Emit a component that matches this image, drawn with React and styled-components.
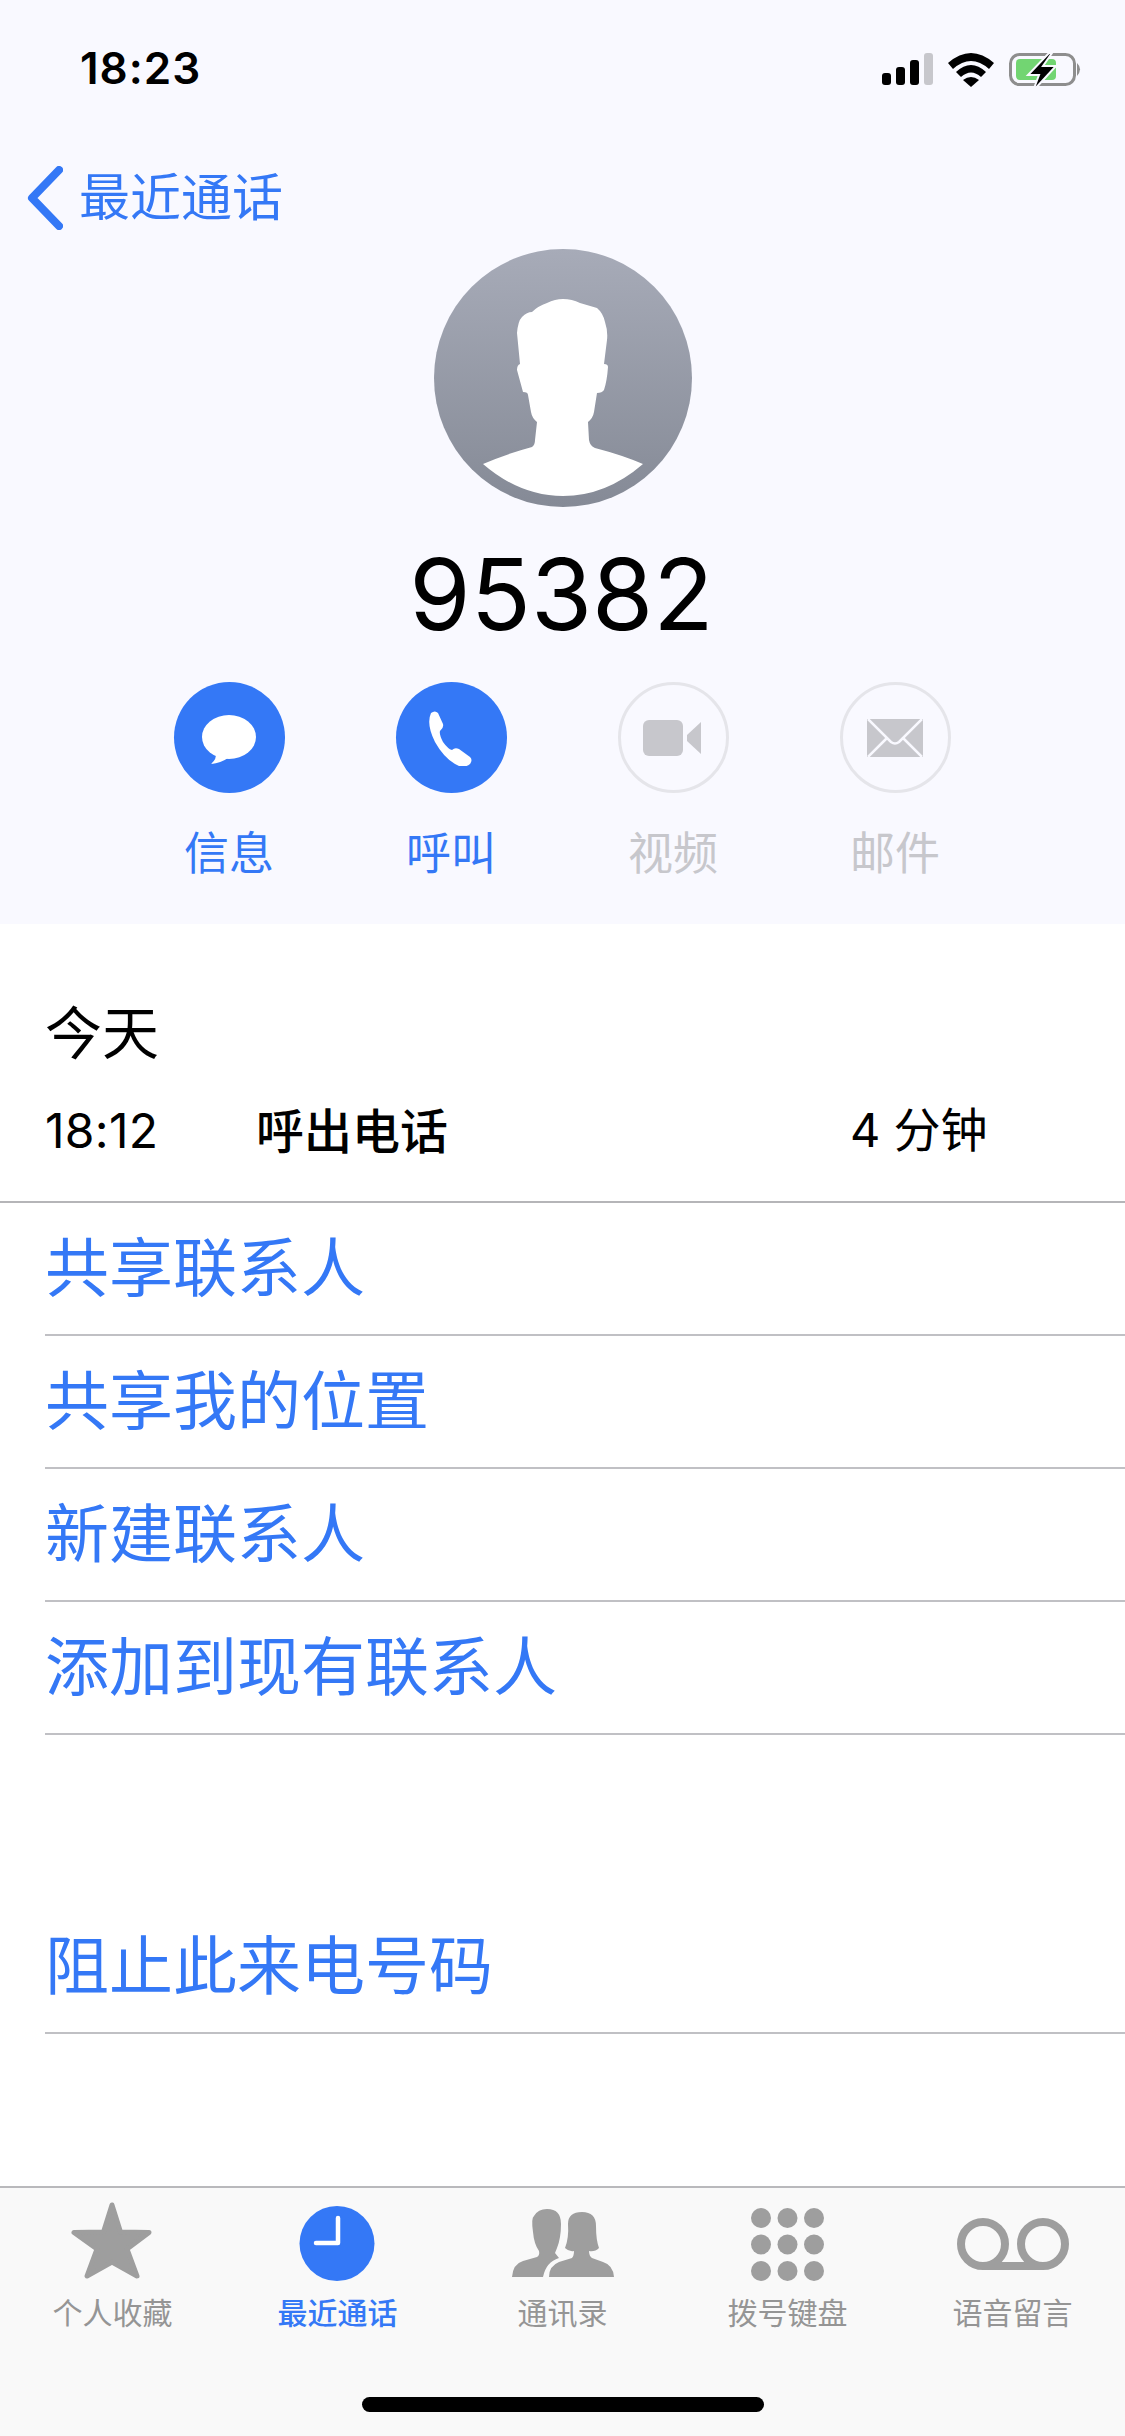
import styled, { createGlobalStyle } from "styled-components";

const BLUE = "#3478f6";
const GREY = "#9e9e9e";
const CJK = `"Noto Sans CJK SC", "Noto Sans", sans-serif`;

const Global = createGlobalStyle`
html, body {
    margin: 0;
    padding: 0;
    background: #fff;
}
`;

const Page = styled.div`
width: 1125px;
height: 2436px;
display: flex;
flex-direction: column;
background: #fff;
font-family: Inter, ${CJK};
overflow: hidden;
`;

const Header = styled.div`
height: 924px;
background: #f9f9ff;
display: flex;
flex-direction: column;
align-items: center;
`;

const StatusBar = styled.div`
align-self: stretch;
height: 136px;
padding: 48px 43px 0 80px;
box-sizing: border-box;
display: flex;
justify-content: space-between;
align-items: flex-start;
`;

const Time = styled.div`
font-size: 44px;
line-height: 40px;
font-weight: 600;
letter-spacing: 1px;
color: #000;
`;

const StatusIcons = styled.svg`
display: block;
margin-top: 5px;
`;

const BackRow = styled.div`
align-self: stretch;
height: 111px;
margin-top: 2px;
padding-left: 27px;
display: flex;
align-items: center;
gap: 16px;
color: ${BLUE};
font-size: 51px;
font-family: ${CJK};
`;

const Chevron = styled.svg`
display: block;
margin-top: 8px;
`;

const Avatar = styled.div`
width: 258px;
height: 258px;
border-radius: 50%;
background: linear-gradient(#a7abb8, #858a96);
overflow: hidden;
`;

const Number = styled.div`
margin: 22px 2px 0 0;
font-size: 99px;
line-height: 130px;
color: #000;
font-weight: 400;
`;

const Actions = styled.div`
margin: 23px 0 0 -1px;
display: flex;
`;

const Action = styled.div`
width: 222px;
display: flex;
flex-direction: column;
align-items: center;
gap: 30px;
color: ${({ $off }) => ($off ? "#c7c7cc" : BLUE)};
font-size: 45px;
line-height: 56px;
font-family: ${CJK};
`;

const Round = styled.div`
width: 111px;
height: 111px;
box-sizing: border-box;
border-radius: 50%;
display: flex;
align-items: center;
justify-content: center;
background: ${({ $off }) => ($off ? "transparent" : BLUE)};
border: ${({ $off }) => ($off ? "3px solid #e5e5ea" : "none")};
`;

const CallBlock = styled.div`
height: 279px;
padding: 69px 0 0 45px;
box-sizing: border-box;
border-bottom: 2px solid #b5b5b8;
font-family: ${CJK};
color: #000;
`;

const Day = styled.div`
font-size: 57px;
line-height: 72px;
`;

const CallRow = styled.div`
margin-top: 25px;
display: flex;
align-items: center;
font-size: 47px;
line-height: 70px;
`;

const CallTime = styled.div`
width: 211px;
padding-top: 6px;
font-size: 48px;
letter-spacing: 0.3px;
font-family: Inter, ${CJK};
`;

const CallType = styled.div`
width: 594px;
font-weight: 500;
font-size: 48px;
`;

const CallLength = styled.div`
padding-top: 4px;
font-family: Inter, ${CJK};
`;

const ActionList = styled.div`
flex: 1;
font-family: ${CJK};
`;

const Row = styled.div`
height: 133px;
margin-left: 45px;
padding-bottom: 12px;
box-sizing: border-box;
border-bottom: 2px solid #c0c0c4;
display: flex;
align-items: center;
color: ${BLUE};
font-size: 64px;
`;

const Spacer = styled.div`
height: 166px;
`;

const TabBar = styled.div`
height: 250px;
box-sizing: border-box;
background: #f9f9f9;
border-top: 2px solid #b9b9bc;
display: flex;
flex-direction: column;
`;

const Tabs = styled.div`
height: 148px;
display: flex;
`;

const Tab = styled.div`
width: 225px;
display: flex;
flex-direction: column;
align-items: center;
color: ${({ $active }) => ($active ? BLUE : "#959595")};
font-size: 30px;
line-height: 40px;
font-weight: ${({ $active }) => ($active ? 500 : 400)};
font-family: ${CJK};
`;

const TabIcon = styled.svg`
display: block;
height: 94px;
margin-bottom: 9px;
`;

const IndicatorWrap = styled.div`
flex: 1;
display: flex;
justify-content: center;
padding-top: 61px;
`;

const Indicator = styled.div`
width: 402px;
height: 15px;
border-radius: 8px;
background: #000;
`;

function Status() {
    return (
        <StatusIcons width="200" height="40" viewBox="0 0 200 40">
            <rect x="0" y="20" width="9" height="12" rx="3" fill="#000" />
            <rect x="14" y="14" width="9" height="18" rx="3" fill="#000" />
            <rect x="28" y="7" width="9" height="25" rx="3" fill="#000" />
            <rect x="42" y="0" width="9" height="32" rx="3" fill="#c7c7cc" />
            <path d="M66 10 Q89 -10 112 10 L107 16 Q89 0 71 16 Z" fill="#000" />
            <path d="M74 19 Q89 5 104 19 L99 24 Q89 15 79 24 Z" fill="#000" />
            <path d="M81 27 Q89 21 97 27 L89 34 Z" fill="#000" />
            <rect x="128.500" y="1.500" width="64" height="30" rx="9" fill="none" stroke="#8e8e8e" strokeWidth="3" />
            <rect x="134" y="6" width="40" height="21" rx="4" fill="#72d572" />
            <path d="M195 10 Q201 16 195 23 Z" fill="#8e8e8e" />
            <path d="M167 0 L146 22 L157 22 L151 38 L174 13 L161 13 L170 0 Z" fill="#000" stroke="#f9f9ff" strokeWidth="2" />
        </StatusIcons>
    );
}

const tabs = [
    {
        label: "个人收藏",
        icon: (
            <TabIcon width="90" viewBox="0 0 90 94">
                <path d="M44 17 L52.500 44 L81 44.500 L59 61 L69 88 L44 74 L19 88 L29 61 L6 44.500 L35.500 44 Z" fill={GREY} stroke={GREY} strokeWidth="5" strokeLinejoin="round" />
            </TabIcon>
        ),
    },
    {
        label: "最近通话",
        active: true,
        icon: (
            <TabIcon width="80" viewBox="0 0 80 94">
                <circle cx="39" cy="55.500" r="37.500" fill={BLUE} />
                <path d="M40 30 V55 H18" fill="none" stroke="#fff" strokeWidth="4.500" strokeLinecap="round" strokeLinejoin="round" />
            </TabIcon>
        ),
    },
    {
        label: "通讯录",
        icon: (
            <TabIcon width="104" viewBox="0 0 104 94">
                <path d="M1 89 Q2 76 12 73 L26 69 Q29 67 28 63 Q23 56 22 44 Q20 30 23 28 Q27 21 36 21 Q50 21 50 36 Q50 50 46 60 L44 65 L48 70 Q35 74 32 89 Z" fill={GREY} />
                <path d="M38 89 Q38 78 48 74 L61 70 Q63 68 63 63 Q58 64 54 60 Q58 50 57 36 Q57 24 71 24 Q85 24 85 38 Q85 52 88 60 Q84 64 78 63 Q78 68 81 70 L92 74 Q102 77 103 89 Z" fill={GREY} />
            </TabIcon>
        ),
    },
    {
        label: "拨号键盘",
        icon: (
            <TabIcon width="74" viewBox="0 0 74 94">
                {[0, 1, 2].map((r) =>
                    [0, 1, 2].map((c) => (
                        <circle key={`${r}-${c}`} cx={10 + c * 26.5} cy={30 + r * 26.5} r="10" fill={GREY} />
                    ))
                )}
            </TabIcon>
        ),
    },
    {
        label: "语音留言",
        icon: (
            <TabIcon width="112" viewBox="0 0 112 94">
                <circle cx="26" cy="56" r="22" fill="none" stroke={GREY} strokeWidth="8" />
                <circle cx="86" cy="56" r="22" fill="none" stroke={GREY} strokeWidth="8" />
                <path d="M26 78 H86" stroke={GREY} strokeWidth="8" />
            </TabIcon>
        ),
    },
];

export default function App() {
    return (
        <Page>
            <Global />
            <Header>
                <StatusBar>
                    <Time>18:23</Time>
                    <Status />
                </StatusBar>
                <BackRow>
                    <Chevron width="36" height="64" viewBox="0 0 36 64">
                        <path d="M32 4 L5 32 L32 60" fill="none" stroke={BLUE} strokeWidth="8" strokeLinecap="round" strokeLinejoin="round" />
                    </Chevron>
                    最近通话
                </BackRow>
                <Avatar>
                    <svg width="258" height="258" viewBox="0 0 258 258">
                        <path
                            fill="#fff"
                            d="M49 215 Q72 205 98 198 Q101 196 101 191 L103 173 Q98 169 97 163 L94 146 Q94 143 89 143 Q86 132 83 121 Q83 116 86 115 L83 84 Q84 72 88 68 Q93 63 98 63 Q104 57 113 54 Q121 50 129 50 Q138 50 146 54 L163 59 Q169 64 171 73 Q174 82 173 91 L170 115 Q174 115 174 118 Q173 132 170 141 Q168 144 163 144 L160 163 Q159 169 154 173 L155 191 Q156 197 161 199 Q188 206 209 215 Q172 247 129 247 Q86 247 49 215 Z"
                        />
                    </svg>
                </Avatar>
                <Number>95382</Number>
                <Actions>
                    <Action>
                        <Round>
                            <svg width="56" height="56" viewBox="0 0 56 56">
                                <ellipse cx="28" cy="27" rx="27" ry="22" fill="#fff" />
                                <path d="M15 42 Q16 49 10 54 Q20 53 27 48 Z" fill="#fff" />
                            </svg>
                        </Round>
                        信息
                    </Action>
                    <Action>
                        <Round>
                            <svg width="56" height="56" viewBox="0 0 56 56">
                                <path d="M8 3 Q12 0 15 3 L20 14 Q21 18 17 21 Q16 24 20 32 Q25 39 29 40 Q32 37 36 39 L47 47 Q50 50 47 54 Q42 58 36 56 Q22 50 12 32 Q3 14 8 3 Z" fill="#fff" />
                            </svg>
                        </Round>
                        呼叫
                    </Action>
                    <Action $off>
                        <Round $off>
                            <svg width="60" height="40" viewBox="0 0 60 40">
                                <rect x="0" y="2" width="40" height="36" rx="6" fill="#c7c7cc" />
                                <path d="M44 17 L58 4 V36 L44 23 Z" fill="#c7c7cc" />
                            </svg>
                        </Round>
                        视频
                    </Action>
                    <Action $off>
                        <Round $off>
                            <svg width="56" height="38" viewBox="0 0 56 38">
                                <rect width="56" height="38" fill="#c7c7cc" />
                                <path d="M1 0 L24 23 Q28 26 32 23 L55 0 M1 38 L20 19 M55 38 L36 19" fill="none" stroke="#f9f9ff" strokeWidth="2.500" />
                            </svg>
                        </Round>
                        邮件
                    </Action>
                </Actions>
            </Header>
            <CallBlock>
                <Day>今天</Day>
                <CallRow>
                    <CallTime>18:12</CallTime>
                    <CallType>呼出电话</CallType>
                    <CallLength>4 分钟</CallLength>
                </CallRow>
            </CallBlock>
            <ActionList>
                <Row>共享联系人</Row>
                <Row>共享我的位置</Row>
                <Row>新建联系人</Row>
                <Row>添加到现有联系人</Row>
                <Spacer />
                <Row>阻止此来电号码</Row>
            </ActionList>
            <TabBar>
                <Tabs>
                    {tabs.map((t) => (
                        <Tab key={t.label} $active={t.active}>
                            {t.icon}
                            {t.label}
                        </Tab>
                    ))}
                </Tabs>
                <IndicatorWrap>
                    <Indicator />
                </IndicatorWrap>
            </TabBar>
        </Page>
    );
}
